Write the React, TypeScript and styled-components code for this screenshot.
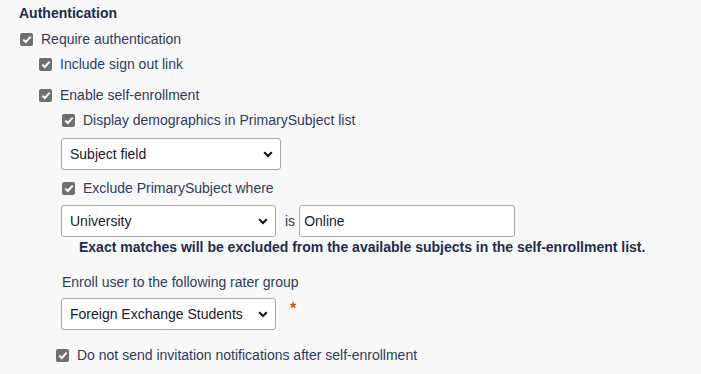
import React from "react";
import styled, { createGlobalStyle } from "styled-components";

const Global = createGlobalStyle`
  html, body { margin: 0; padding: 0; background: #f8f8f8; }
  body { font-family: "Liberation Sans", Arial, sans-serif; font-size: 14px; color: #2e3b5c; }
`;

const Page = styled.div`
  padding: 4px 0 0 19px;
  display: flex;
  flex-direction: column;
`;

const Heading = styled.div`
  font-weight: bold;
  font-size: 14px;
  color: #1f2b4b;
  height: 18px;
  line-height: 18px;
`;

const Row = styled.label<{ indent: number; top: number }>`
  display: flex;
  align-items: center;
  gap: 8px;
  margin-left: ${(p) => p.indent}px;
  margin-top: ${(p) => p.top}px;
  height: 18px;
  line-height: 18px;
`;

const Box = styled.span`
  width: 13px;
  height: 13px;
  border-radius: 2px;
  background: #6f6f6f;
  display: inline-flex;
  align-items: center;
  justify-content: center;
  flex: none;
`;

const Select = styled.div<{ width: number }>`
  box-sizing: border-box;
  width: ${(p) => p.width}px;
  height: 32px;
  border: 1px solid #a8a8a8;
  border-radius: 3px;
  background: #fff;
  display: flex;
  align-items: center;
  justify-content: space-between;
  padding: 0 7px 0 8px;
  color: #1a1a2a;
  flex: none;
`;

const Input = styled.div`
  box-sizing: border-box;
  width: 216px;
  height: 32px;
  border: 1px solid #a8a8a8;
  border-radius: 3px;
  background: #fff;
  display: flex;
  align-items: center;
  padding: 0 4px;
  color: #1a1a2a;
`;

const Block = styled.div<{ indent: number; top: number }>`
  margin-left: ${(p) => p.indent}px;
  margin-top: ${(p) => p.top}px;
  display: flex;
  align-items: center;
`;

const Is = styled.span`
  margin: 0 4px 0 9px;
`;

const Note = styled.div`
  margin-left: 60px;
  font-weight: bold;
  color: #1f2c4e;
  height: 20px;
  line-height: 20px;
`;

const Label = styled.div`
  margin-left: 43px;
  margin-top: 16px;
  height: 18px;
  line-height: 18px;
`;

const Star = styled.span`
  color: #b5651d;
  font-weight: bold;
  font-size: 16px;
  align-self: flex-start;
  margin: 2px 0 0 14px;
`;

const Chevron = () => (
  <svg width="10" height="7" viewBox="0 0 10 7">
    <path d="M1.2 1.2 L5 5 L8.8 1.2" fill="none" stroke="#111" strokeWidth="2" />
  </svg>
);

const Check = ({ text, indent, top }: { text: string; indent: number; top: number }) => (
  <Row indent={indent} top={top}>
    <Box>
      <svg width="10" height="9" viewBox="0 0 10 9">
        <path d="M1.3 4.6 L3.8 7 L8.7 1.6" fill="none" stroke="#fff" strokeWidth="2" />
      </svg>
    </Box>
    <span>{text}</span>
  </Row>
);

export default function App() {
  return (
    <>
      <Global />
      <Page>
        <Heading>Authentication</Heading>
        <Check text="Require authentication" indent={1} top={8} />
        <Check text="Include sign out link" indent={20} top={7} />
        <Check text="Enable self-enrollment" indent={20} top={13} />
        <Check text="Display demographics in PrimarySubject list" indent={43} top={7} />
        <Block indent={42} top={9}>
          <Select width={220}>
            <span>Subject field</span>
            <Chevron />
          </Select>
        </Block>
        <Check text="Exclude PrimarySubject where" indent={43} top={9} />
        <Block indent={42} top={8}>
          <Select width={215}>
            <span>University</span>
            <Chevron />
          </Select>
          <Is>is</Is>
          <Input>Online</Input>
        </Block>
        <Note>Exact matches will be excluded from the available subjects in the self-enrollment list.</Note>
        <Label>Enroll user to the following rater group</Label>
        <Block indent={42} top={7}>
          <Select width={215}>
            <span>Foreign Exchange Students</span>
            <Chevron />
          </Select>
          <Star>*</Star>
        </Block>
        <Check text="Do not send invitation notifications after self-enrollment" indent={37} top={16} />
      </Page>
    </>
  );
}
